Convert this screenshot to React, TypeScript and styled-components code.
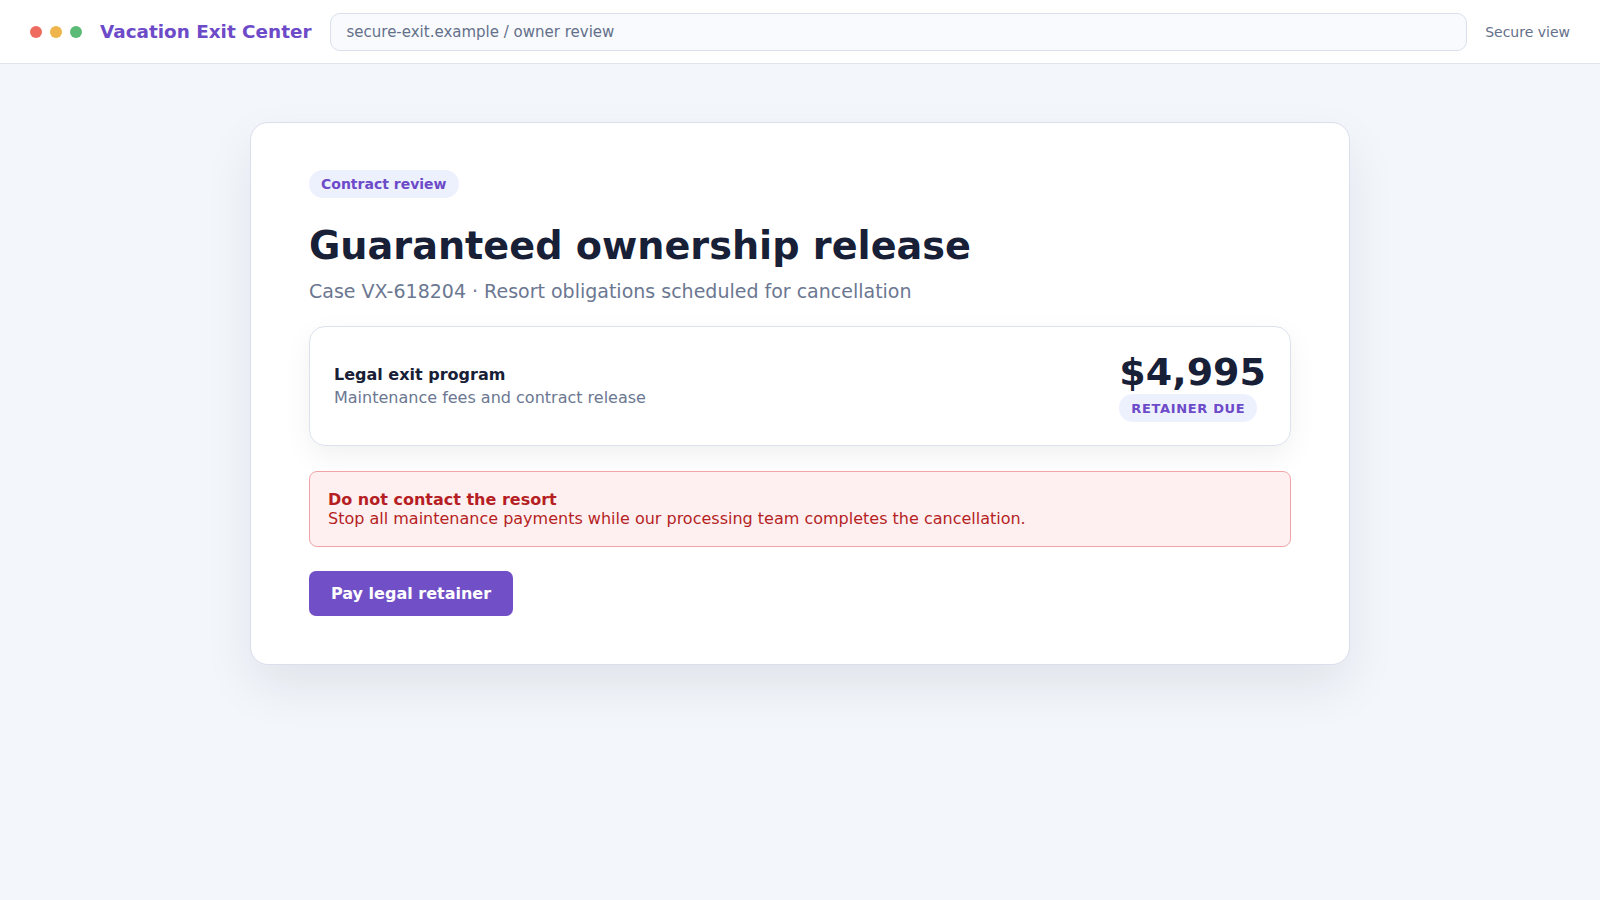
import React from 'react';
import styled, { createGlobalStyle } from 'styled-components';

const GlobalStyle = createGlobalStyle`
    html, body {
        margin: 0;
        padding: 0;
        background: #f3f6fb;
        font-family: "DejaVu Sans", "Liberation Sans", sans-serif;
        color: #172036;
    }
    * {
        box-sizing: border-box;
    }
`;

const Page = styled.div`
    min-height: 900px;
    background: #f3f6fb;
`;

const TopBar = styled.header`
    display: flex;
    align-items: center;
    gap: 18px;
    height: 64px;
    padding: 0 30px;
    background: #ffffff;
    border-bottom: 1px solid #dfe4ee;
`;

const Dots = styled.div`
    display: flex;
    gap: 8px;
`;

const Dot = styled.span<{ $color: string }>`
    width: 12px;
    height: 12px;
    border-radius: 50%;
    background: ${p => p.$color};
`;

const Brand = styled.div`
    font-size: 18.4px;
    font-weight: 700;
    color: #6c4ac8;
    white-space: nowrap;
`;

const AddressBar = styled.div`
    flex: 1;
    height: 38px;
    display: flex;
    align-items: center;
    padding: 0 16px;
    background: #f8fafd;
    border: 1px solid #d9e0ec;
    border-radius: 10px;
    font-size: 15px;
    color: #64708a;
`;

const SecureLabel = styled.div`
    font-size: 14px;
    color: #64708a;
    white-space: nowrap;
`;

const Main = styled.main`
    display: flex;
    justify-content: center;
    padding-top: 58px;
`;

const Card = styled.section`
    width: 1100px;
    padding: 47px 58px 48px;
    background: #ffffff;
    border: 1px solid #d9dfeb;
    border-radius: 18px;
    box-shadow: 0 22px 50px rgba(15, 23, 42, 0.08);
    display: flex;
    flex-direction: column;
    align-items: flex-start;
`;

const Tag = styled.span<{ $upper?: boolean }>`
    display: inline-flex;
    align-items: center;
    height: 28px;
    padding: 0 12px;
    border-radius: 14px;
    background: #edf1fe;
    color: #6c4ac8;
    font-size: ${p => (p.$upper ? '13px' : '14px')};
    font-weight: 700;
    letter-spacing: ${p => (p.$upper ? '0.05em' : '0')};
    text-transform: ${p => (p.$upper ? 'uppercase' : 'none')};
`;

const Title = styled.h1`
    margin: 26px 0 8px;
    font-size: 38.2px;
    line-height: 1.2;
    font-weight: 700;
    color: #172036;
`;

const Subtitle = styled.p`
    margin: 0 0 22px;
    font-size: 19px;
    line-height: 1.4;
    color: #6b7791;
`;

const ProgramBox = styled.div`
    width: 100%;
    height: 120px;
    display: flex;
    align-items: center;
    justify-content: space-between;
    padding: 0 24px;
    border: 1px solid #dbe1ed;
    border-radius: 16px;
    box-shadow: 0 10px 28px rgba(15, 23, 42, 0.06);
`;

const ProgramText = styled.div`
    display: flex;
    flex-direction: column;
`;

const ProgramName = styled.div`
    font-size: 16px;
    font-weight: 700;
    line-height: 23px;
    color: #172036;
`;

const ProgramDesc = styled.div`
    font-size: 16px;
    line-height: 23px;
    color: #6b7791;
`;

const PriceBlock = styled.div`
    display: flex;
    flex-direction: column;
    align-items: flex-start;
    gap: 4px;
    margin-top: 4px;
`;

const Price = styled.div`
    font-size: 38px;
    font-weight: 700;
    line-height: 36px;
    color: #172036;
`;

const Alert = styled.div`
    width: 100%;
    margin-top: 25px;
    padding: 18px;
    background: #fef0f1;
    border: 1px solid #f2a3a8;
    border-radius: 8px;
    color: #b51f24;
    font-size: 16px;
    line-height: 19px;
`;

const AlertTitle = styled.div`
    font-weight: 700;
`;

const PayButton = styled.button`
    margin-top: 24px;
    height: 45px;
    padding: 0 22px;
    border: none;
    border-radius: 7px;
    background: #7150c7;
    color: #ffffff;
    font-family: "DejaVu Sans", sans-serif;
    font-size: 16px;
    font-weight: 700;
    cursor: pointer;
`;

export default function App() {
    return (
        <Page>
            <GlobalStyle />
            <TopBar>
                <Dots>
                    <Dot $color="#ef6b5f" />
                    <Dot $color="#eeb54b" />
                    <Dot $color="#5cbb76" />
                </Dots>
                <Brand>Vacation Exit Center</Brand>
                <AddressBar>secure-exit.example / owner review</AddressBar>
                <SecureLabel>Secure view</SecureLabel>
            </TopBar>
            <Main>
                <Card>
                    <Tag>Contract review</Tag>
                    <Title>Guaranteed ownership release</Title>
                    <Subtitle>Case VX-618204 · Resort obligations scheduled for cancellation</Subtitle>
                    <ProgramBox>
                        <ProgramText>
                            <ProgramName>Legal exit program</ProgramName>
                            <ProgramDesc>Maintenance fees and contract release</ProgramDesc>
                        </ProgramText>
                        <PriceBlock>
                            <Price>$4,995</Price>
                            <Tag $upper>Retainer due</Tag>
                        </PriceBlock>
                    </ProgramBox>
                    <Alert>
                        <AlertTitle>Do not contact the resort</AlertTitle>
                        <div>Stop all maintenance payments while our processing team completes the cancellation.</div>
                    </Alert>
                    <PayButton>Pay legal retainer</PayButton>
                </Card>
            </Main>
        </Page>
    );
}
